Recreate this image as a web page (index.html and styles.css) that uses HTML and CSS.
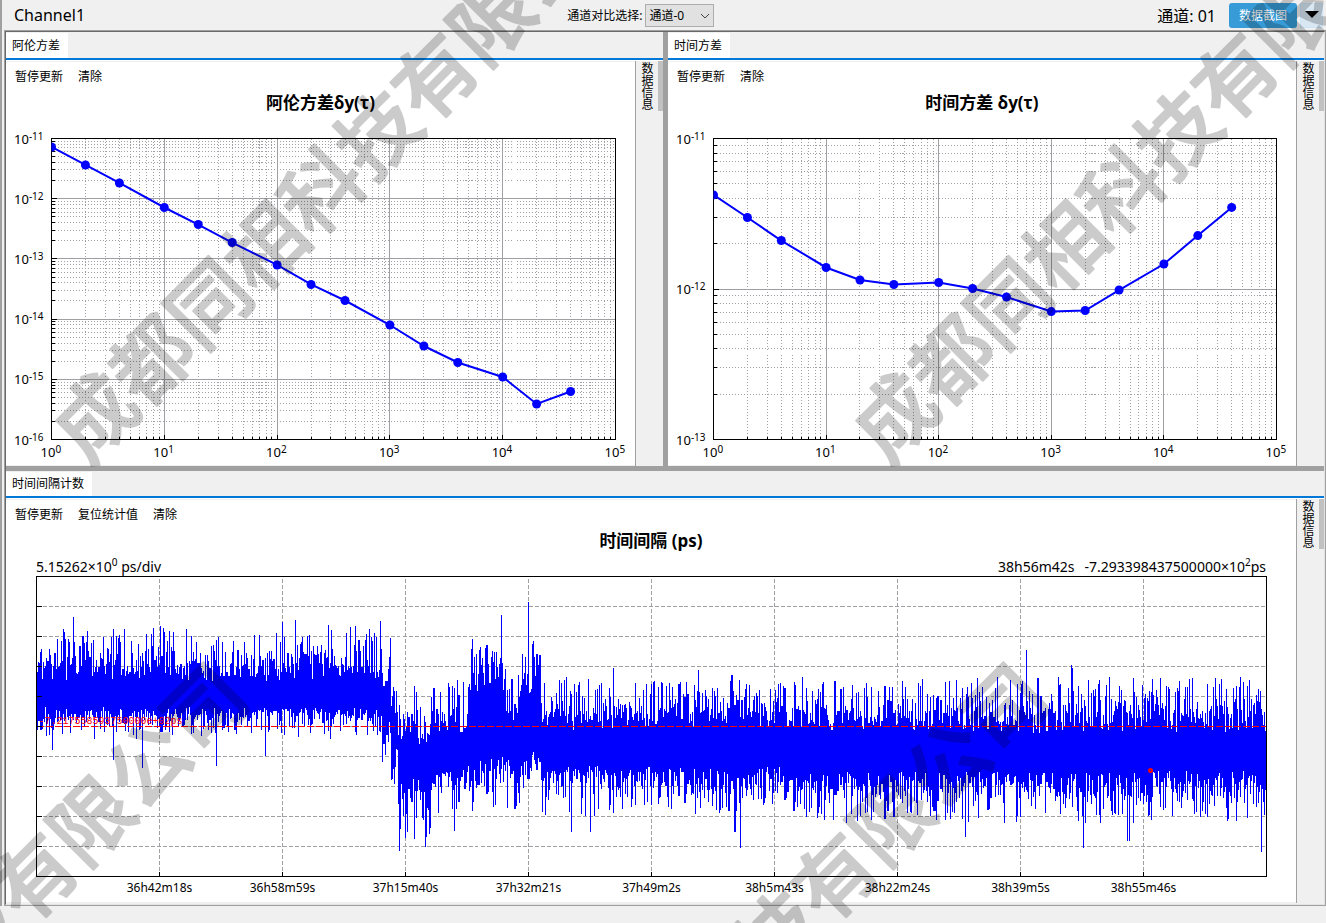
FILE: index.html
```
<!DOCTYPE html>
<html lang="zh-CN">
<head>
    <meta charset="UTF-8">
    <meta name="viewport" content="width=device-width, initial-scale=1.0">
    <title>Channel1</title>
    <link rel="stylesheet" href="styles.css">
</head>
<body>
    <div class="app">
        <!-- Toolbar -->
        <header class="toolbar">
            <h1 class="channel-name">Channel1</h1>
            <div class="compare">
                <label for="compareChannel">通道对比选择:</label>
                <div class="select-wrap">
                    <select id="compareChannel">
                        <option>通道-0</option>
                        <option>通道-1</option>
                    </select>
                    <svg class="select-arrow" width="10" height="6" viewBox="0 0 10 6"><path d="M1 1l4 4 4-4" fill="none" stroke="#444"/></svg>
                </div>
            </div>
            <div class="toolbar-right">
                <span class="channel-no">通道: 01</span>
                <button type="button" class="shot-button">数据截图</button>
                <button type="button" class="more-button" aria-label="更多">
                    <svg width="14" height="8" viewBox="0 0 14 8"><path d="M0 0h14l-7 7z"/></svg>
                </button>
            </div>
        </header>

        <!-- Panels -->
        <div class="frame">
            <main class="panels">
                <section class="panel">
                    <div class="tab-bar"><button type="button" class="tab">阿伦方差</button></div>
                    <div class="panel-body">
                        <div class="panel-main">
                            <div class="actions">
                                <button type="button">暂停更新</button>
                                <button type="button">清除</button>
                            </div>
                            <h2>阿伦方差δy(τ)</h2>
                            <svg class="chart chart-log" id="allanChart"></svg>
                        </div>
                        <aside class="side">
                            <button type="button" class="side-tab">数据信息</button>
                            <div class="side-thumb"></div>
                        </aside>
                    </div>
                </section>

                <section class="panel">
                    <div class="tab-bar"><button type="button" class="tab">时间方差</button></div>
                    <div class="panel-body">
                        <div class="panel-main">
                            <div class="actions">
                                <button type="button">暂停更新</button>
                                <button type="button">清除</button>
                            </div>
                            <h2>时间方差 δy(τ)</h2>
                            <svg class="chart chart-log" id="timeChart"></svg>
                        </div>
                        <aside class="side">
                            <button type="button" class="side-tab">数据信息</button>
                            <div class="side-thumb"></div>
                        </aside>
                    </div>
                </section>

                <section class="panel panel-wide">
                    <div class="tab-bar"><button type="button" class="tab">时间间隔计数</button></div>
                    <div class="panel-body">
                        <div class="panel-main">
                            <div class="actions">
                                <button type="button">暂停更新</button>
                                <button type="button">复位统计值</button>
                                <button type="button">清除</button>
                            </div>
                            <h2>时间间隔 (ps)</h2>
                            <div class="readout">
                                <span>5.15262×10<sup>0</sup> ps/div</span>
                                <span class="readout-value"><span>38h56m42s</span><span>-7.293398437500000×10<sup>2</sup>ps</span></span>
                            </div>
                            <svg class="chart" id="intervalChart"></svg>
                        </div>
                        <aside class="side">
                            <button type="button" class="side-tab">数据信息</button>
                            <div class="side-thumb"></div>
                        </aside>
                    </div>
                </section>
            </main>
        </div>
        <footer class="status-bar"></footer>

        <!-- Watermark -->
        <svg class="watermark" aria-hidden="true">
            <text transform="translate(88 466) rotate(-45)">成都同相科技有限公司</text>
            <text transform="translate(888 466) rotate(-45)">成都同相科技有限公司</text>
            <text transform="translate(-312 1266) rotate(-45)">成都同相科技有限公司</text>
            <text transform="translate(488 1266) rotate(-45)">成都同相科技有限公司</text>
        </svg>
    </div>

    <script src="charts.js"></script>
</body>
</html>
```
FILE: styles.css
```
/* General Styles */
* {
    box-sizing: border-box;
}

body {
    margin: 0;
    font-family: "Noto Sans", "Noto Sans CJK SC", sans-serif;
    font-size: 12px;
    color: #000;
    background-color: #f0f0f0;
}

button, select {
    font-family: inherit;
    font-size: 12px;
    color: inherit;
    padding: 0;
    border: none;
    background: none;
}

h1, h2 {
    margin: 0;
}

.app {
    position: relative;
    display: flex;
    flex-direction: column;
    height: 100vh;
    min-height: 600px;
    overflow: hidden;
}

/* Toolbar */
.toolbar {
    display: flex;
    align-items: center;
    height: 30px;
    padding-left: 12px;
    border-left: 2px solid #a0a0a0;
}

.channel-name {
    flex: 10 1 0;
    font-size: 16px;
    font-weight: normal;
}

.compare {
    display: flex;
    align-items: center;
    gap: 3px;
}

.select-wrap {
    position: relative;
}

.select-wrap select {
    appearance: none;
    display: block;
    width: 69px;
    height: 23px;
    padding-left: 3px;
    border: 1px solid #adadad;
    background-color: #e1e1e1;
}

.select-arrow {
    position: absolute;
    right: 4px;
    top: 9px;
    pointer-events: none;
}

.toolbar-right {
    flex: 11 1 0;
    display: flex;
    align-items: center;
    justify-content: flex-end;
    padding-right: 3px;
}

.channel-no {
    margin-right: 13px;
    font-size: 16px;
}

.shot-button {
    width: 68px;
    height: 25px;
    margin-right: 3px;
    border-radius: 3px;
    background-color: #369bd7;
    color: #fff;
}

.more-button {
    display: flex;
    align-items: center;
    justify-content: center;
    width: 23px;
    height: 25px;
    border: 1px solid #cce4f7;
    background-color: #d9e7f3;
}

/* Sunken frame around the panels */
.frame {
    flex: 1;
    min-height: 0;
    display: flex;
    padding-left: 2px;
    border-left: 2px solid #a0a0a0;
}

.panels {
    flex: 1;
    display: grid;
    grid-template-columns: calc(50% - 2px) 1fr;
    grid-template-rows: calc(50% - 2px) 1fr;
    gap: 5px;
    border: 1px solid #696969;
    border-right-color: #e3e3e3;
    border-bottom-color: #e3e3e3;
    outline: 1px solid #a0a0a0;
    margin: 1px;
    background-color: #a0a0a0;
}

.panel {
    display: flex;
    flex-direction: column;
    min-width: 0;
    min-height: 0;
    background-color: #f0f0f0;
}

.panel-wide {
    grid-column: 1 / 3;
    padding-bottom: 1px;
}

.tab-bar {
    display: flex;
    height: 28px;
    padding-top: 1px;
    border-bottom: 2px solid #0078d7;
}

.panel-wide .tab-bar {
    height: 27px;
}

.tab {
    padding: 0 8px 2px 6px;
    background-color: #fff;
}

.panel-body {
    flex: 1;
    display: flex;
    min-height: 0;
    border-top: 1px solid #fff;
}

.panel-main {
    flex: 1;
    display: flex;
    flex-direction: column;
    min-width: 0;
    border-top: 1px solid #f0f0f0;
    border-bottom: 1px solid #f0f0f0;
    background-color: #fff;
}

.actions {
    display: flex;
    gap: 15px;
    height: 27px;
    padding-left: 9px;
}

h2 {
    height: 29px;
    font-size: 17px;
    line-height: 28px;
    text-align: center;
}

/* Side strip */
.side {
    display: flex;
    justify-content: space-between;
    align-items: flex-start;
    width: 28px;
    padding-left: 3px;
    border-left: 1px solid #a0a0a0;
}

.side-tab {
    height: 50px;
    line-height: 14px;
    writing-mode: vertical-rl;
}

.side-thumb {
    width: 5px;
    height: 50px;
    background-color: #c1c1c1;
}

/* Charts */
.chart {
    display: block;
    flex: 1;
    width: 100%;
    min-height: 0;
}

.chart text {
    font-size: 12px;
}

.chart-log text {
    font-size: 13px;
}

.chart-log .exp {
    font-size: 10px;
}

.chart .mean-label {
    font-family: "Liberation Mono", monospace;
    font-size: 10px;
    fill: #f00;
}

.axis {
    fill: none;
    stroke: #000;
    shape-rendering: crispEdges;
}

.grid {
    fill: none;
    stroke: #a0a0a4;
    shape-rendering: crispEdges;
}

.grid-minor {
    stroke-dasharray: 1 2;
}

.grid-dash {
    stroke-dasharray: 4 2;
}

.series {
    fill: none;
    stroke: #00f;
    stroke-width: 2;
}

.marker {
    fill: #00f;
}

.noise {
    fill: none;
    stroke: #00f;
    shape-rendering: crispEdges;
}

.mean {
    stroke: #f00;
    stroke-dasharray: 7 2;
    shape-rendering: crispEdges;
}

.cursor {
    fill: none;
    stroke: #f00;
    stroke-width: 2;
}

.readout {
    display: flex;
    justify-content: space-between;
    height: 20px;
    padding: 0 30px;
    font-size: 14px;
    line-height: 22px;
}

.readout-value {
    display: flex;
    gap: 10px;
}

.readout sup {
    font-size: 10px;
    line-height: 0;
}

.status-bar {
    height: 17px;
}

/* Watermark */
.watermark {
    position: absolute;
    inset: 0;
    width: 100%;
    height: 100%;
    opacity: 0.2;
    pointer-events: none;
}

.watermark text {
    font-family: "Noto Sans CJK SC", sans-serif;
    font-size: 80px;
    font-weight: 500;
    stroke: #000;
    stroke-width: 2;
    stroke-linejoin: round;
}
```
FILE: charts.js
```
const SVG_NS = "http://www.w3.org/2000/svg";

// log10 of the averaging time and of the deviation
const tau = [0, 0.301, 0.602, 1, 1.301, 1.602, 2, 2.301, 2.602, 3, 3.301, 3.602, 4, 4.301, 4.602];
const allan = [-11.141, -11.44, -11.739, -12.146, -12.429, -12.728, -13.101, -13.425, -13.691, -14.098, -14.447, -14.721, -14.962, -15.41, -15.203];
const timeDev = [-11.375, -11.525, -11.678, -11.857, -11.94, -11.97, -11.957, -11.997, -12.053, -12.15, -12.143, -12.007, -11.834, -11.645, -11.458];

const timeLabels = ["36h42m18s", "36h58m59s", "37h15m40s", "37h32m21s", "37h49m2s", "38h5m43s", "38h22m24s", "38h39m5s", "38h55m46s"];

// Noise segments: end, top base, top spread, top limit, bottom base, bottom spread, bottom limit
// x runs over 1230 samples, y over 300 units
const segments = [
    [346, 105, 17, 50, 130, 10, 165],
    [355, 120, 16, 70, 140, 18, 200],
    [362, 140, 20, 110, 165, 20, 215],
    [395, 170, 20, 105, 200, 24, 262],
    [432, 160, 20, 100, 190, 16, 245],
    [468, 122, 24, 70, 178, 18, 238],
    [486, 145, 18, 82, 182, 18, 238],
    [505, 118, 22, 66, 174, 16, 230],
    [745, 154, 19, 98, 188, 16, 242],
    [1230, 157, 19, 100, 192, 18, 247]
];

// Single high and low peaks
const highs = [[37, 40], [88, 52], [124, 49], [133, 54], [150, 52], [246, 45], [259, 43], [292, 48], [319, 49], [333, 52], [344, 44], [354, 61], [401, 103], [421, 103], [436, 62], [450, 68], [465, 38], [476, 84], [492, 25], [497, 64], [577, 91], [662, 93], [855, 92], [990, 73], [1035, 88], [1036, 91], [1097, 101], [1156, 101], [1204, 100]];
const lows = [[16, 173], [77, 183], [106, 191], [180, 189], [229, 179], [348, 235], [363, 274], [378, 262], [389, 270], [418, 254], [535, 255], [554, 255], [704, 271], [698, 255], [805, 261], [929, 260], [952, 261], [1047, 271], [1091, 264], [1093, 264], [1225, 275]];

function add(svg, name, attrs, text) {
    const el = document.createElementNS(SVG_NS, name);
    for (const key in attrs) {
        el.setAttribute(key, attrs[key]);
    }
    if (text) {
        el.textContent = text;
    }
    svg.appendChild(el);
    return el;
}

function powerLabel(svg, x, y, exponent) {
    const label = add(svg, "text", { x: x, y: y }, "10");
    add(label, "tspan", { dy: -4, class: "exp" }, String(exponent));
}

function drawLogChart(id, yMin, yMax, values) {
    const svg = document.getElementById(id);
    svg.innerHTML = "";
    const box = svg.getBoundingClientRect();
    const left = 45.5;
    const right = Math.round(box.width) - 19.5;
    const top = 20.5;
    const bottom = Math.round(box.height) - 25.5;
    const px = v => left + (right - left) * v / 5;
    const py = v => bottom - (bottom - top) * (v - yMin) / (yMax - yMin);
    const snap = v => Math.floor(v) + 0.5;

    let minor = "", major = "", ticks = "";
    for (let d = 0; d < 5; d++) {
        for (let n = 1; n < 10; n++) {
            const x = snap(px(d + Math.log10(n)));
            const line = `M${x} ${top}V${bottom}`;
            if (n > 1) minor += line;
            else major += line;
            ticks += `M${x} ${bottom}v${n > 1 ? -3 : -5}`;
        }
    }
    for (let d = yMin; d < yMax; d++) {
        for (let n = 1; n < 10; n++) {
            const y = snap(py(d + Math.log10(n)));
            const line = `M${left} ${y}H${right}`;
            if (n > 1) minor += line;
            else major += line;
            ticks += `M${left} ${y}h${n > 1 ? 3 : 5}`;
        }
    }
    add(svg, "path", { d: minor, class: "grid grid-minor" });
    add(svg, "path", { d: major, class: "grid" });
    add(svg, "path", { d: `M${left} ${top}H${right}V${bottom}H${left}Z` + ticks, class: "axis" });

    const clip = add(svg, "clipPath", { id: id + "Clip" });
    add(clip, "rect", { x: left, y: top, width: right - left, height: bottom - top });
    const plot = add(svg, "g", { "clip-path": `url(#${id}Clip)` });
    add(plot, "polyline", { points: values.map((v, i) => px(tau[i]) + "," + py(v)).join(" "), class: "series" });
    values.forEach((v, i) => add(plot, "circle", { cx: px(tau[i]), cy: py(v), r: 4.5, class: "marker" }));

    for (let d = 0; d <= 5; d++) {
        powerLabel(svg, px(d) - 11, bottom + 17, d);
    }
    for (let d = yMin; d <= yMax; d++) {
        powerLabel(svg, 8, py(d) + 5, d);
    }
}

function drawIntervalChart() {
    const svg = document.getElementById("intervalChart");
    svg.innerHTML = "";
    const box = svg.getBoundingClientRect();
    const left = 30.5;
    const right = Math.round(box.width) - 29.5;
    const top = 0.5;
    const bottom = Math.round(box.height) - 25.5;
    const w = right - left;
    const h = bottom - top;

    let grid = "", ticks = "";
    for (let i = 1; i < 10; i++) {
        const x = Math.floor(left + w * i / 10) + 0.5;
        const y = Math.floor(top + h * i / 10) + 0.5;
        grid += `M${x} ${bottom}V${top}M${left} ${y}H${right}`;
        ticks += `M${x} ${bottom}v-5M${left} ${y}h5`;
        add(svg, "text", { x: x, y: bottom + 15, "text-anchor": "middle" }, timeLabels[i - 1]);
    }
    add(svg, "path", { d: grid, class: "grid grid-dash" });

    // Fixed seed, so a redraw keeps the same trace
    let seed = 20177;
    const rand = () => {
        seed = (seed * 16807) % 2147483647;
        return seed / 2147483647;
    };
    const step = () => -Math.log(1 - rand() * 0.98);
    const spread = () => Math.max(step(), step());
    const samples = [];
    for (let i = 0; i < 1230; i++) {
        const s = segments.find(seg => i < seg[0]);
        samples.push([Math.max(s[3] + 12 * rand(), s[1] - s[2] * spread()), Math.min(s[6] - 12 * rand(), s[4] + s[5] * spread())]);
    }
    highs.forEach(p => samples[p[0]][0] = p[1]);
    lows.forEach(p => samples[p[0]][1] = p[1]);

    // One vertical stroke for each pixel column
    let trace = "";
    for (let x = left; x < right; x++) {
        const s = samples[Math.floor((x - left) / w * 1230)];
        trace += `M${x} ${Math.round(top + h * s[0] / 300)}V${Math.round(top + h * s[1] / 300)}`;
    }
    add(svg, "path", { d: trace, class: "noise" });

    const middle = Math.floor(top + h / 2) + 0.5;
    add(svg, "path", { d: `M${left} ${middle}H${right}`, class: "mean" });
    add(svg, "text", { x: left + 2, y: middle - 3, class: "mean-label" }, "-7.217558593750000e+02ps");
    add(svg, "circle", { cx: left + w * 0.9057, cy: top + h * 0.647, r: 1.5, class: "cursor" });
    add(svg, "path", { d: `M${left} ${top}H${right}V${bottom}H${left}Z` + ticks, class: "axis" });
}

function drawAll() {
    drawLogChart("allanChart", -16, -11, allan);
    drawLogChart("timeChart", -13, -11, timeDev);
    drawIntervalChart();
}

window.addEventListener("resize", drawAll);
drawAll();
```
